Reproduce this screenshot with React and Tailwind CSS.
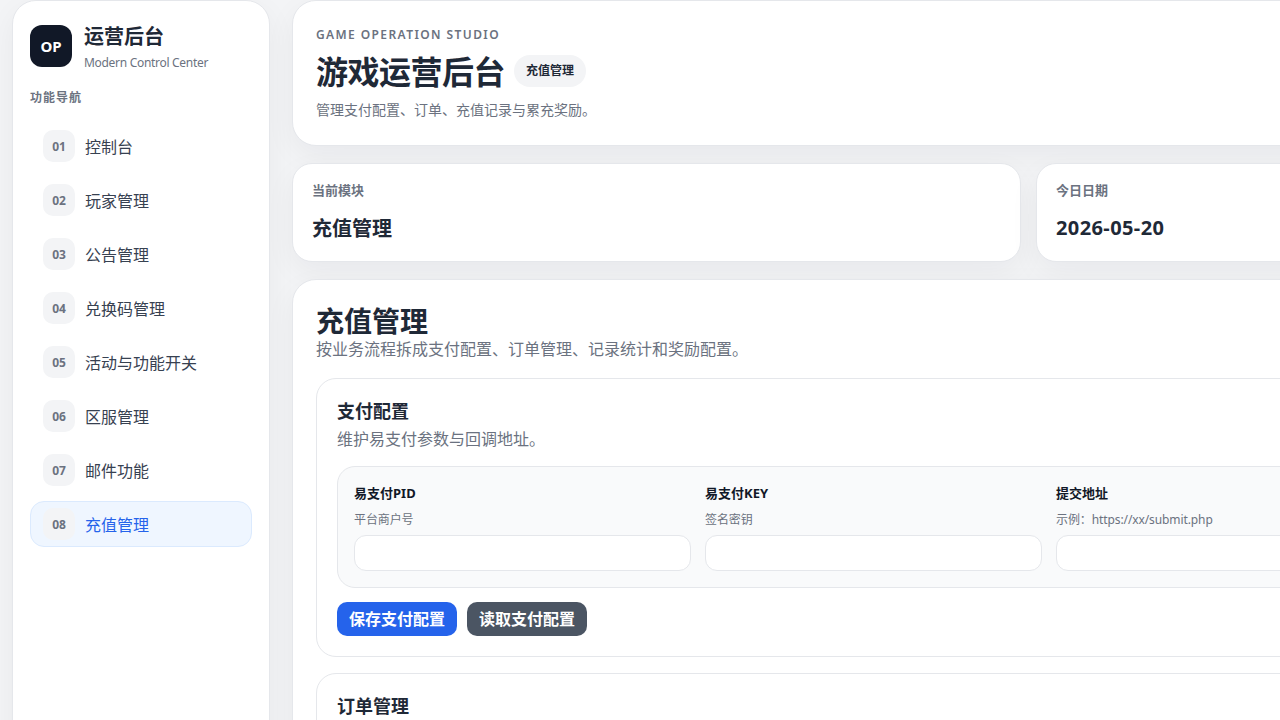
const navItems = ["控制台", "玩家管理", "公告管理", "兑换码管理", "活动与功能开关", "区服管理", "邮件功能", "充值管理"];

const payFields = [
  { label: "易支付PID", hint: "平台商户号" },
  { label: "易支付KEY", hint: "签名密钥" },
  { label: "提交地址", hint: "示例：https://xx/submit.php" },
  { label: "回调地址", hint: "示例：https://xx/notify" },
];

function Sidebar() {
  return (
    <aside className="w-[258px] shrink-0 h-[760px] bg-white border border-[#e5e7eb] rounded-[24px] px-[17px] pt-[24px] shadow-[0_10px_30px_rgba(17,24,39,0.05)]">
      <div className="flex items-start gap-3">
        <div className="w-[42px] h-[42px] rounded-xl bg-[#111827] text-white flex items-center justify-center text-[15px] font-bold">OP</div>
        <div>
          <div className="text-[20px] leading-[24px] font-bold text-[#1f2937]">运营后台</div>
          <div className="text-[12px] leading-[16px] mt-[6px] tracking-[-0.3px] text-[#6b7280]">Modern Control Center</div>
        </div>
      </div>
      <div className="mt-[19px] text-[12px] leading-[16px] font-bold tracking-[0.08em] text-[#6b7280]">功能导航</div>
      <nav className="mt-[17px] flex flex-col gap-2">
        {navItems.map((item, i) => (
          <div
            key={item}
            className={
              i === 7
                ? "h-[46px] flex items-center gap-[10px] pl-3 rounded-[14px] border border-[#dbeafe] bg-[#eff6ff] text-[#2563eb]"
                : "h-[46px] flex items-center gap-[10px] pl-3 rounded-[14px] border border-transparent text-[#374151]"
            }
          >
            <span className="w-[32px] h-[32px] pt-[1px] rounded-[10px] bg-[#f3f4f6] flex items-center justify-center text-[12px] font-bold text-[#6b7280]">
              {"0" + (i + 1)}
            </span>
            <span className="text-[16px] leading-[24px] translate-y-[1px]">{item}</span>
          </div>
        ))}
      </nav>
    </aside>
  );
}

function Field({ label, hint }) {
  return (
    <div>
      <div className="text-[13px] leading-[18px] mt-[1px] font-bold text-[#111827]">{label}</div>
      <div className="text-[12px] leading-[16px] mt-[10px] tracking-[-0.1px] text-[#6b7280]">{hint}</div>
      <input className="mt-[7px] block w-full h-[36px] bg-white border border-[#e5e7eb] rounded-xl" />
    </div>
  );
}

export default function App() {
  return (
    <div
      className="h-screen overflow-hidden bg-[#f3f4f6] flex gap-[22px] pl-3 text-[#1f2937]"
      style={{ fontFamily: '"Noto Sans", "Noto Sans CJK SC", sans-serif' }}
    >
      <Sidebar />
      <main className="w-[1514px] shrink-0 flex flex-col">
        <header className="h-[146px] shrink-0 bg-white border border-[#e5e7eb] rounded-[24px] px-[23px] pt-[26px] shadow-[0_10px_30px_rgba(17,24,39,0.05)]">
          <div className="text-[12px] leading-[16px] font-semibold tracking-[1.4px] text-[#6b7280]">GAME OPERATION STUDIO</div>
          <div className="mt-[7px] flex items-center gap-[9px]">
            <h1 className="text-[32px] leading-[44px] font-bold tracking-[-0.5px] text-[#1f2937]">游戏运营后台</h1>
            <span className="h-[32px] mb-[2px] px-3 rounded-full bg-[#f3f4f6] flex items-center text-[12px] font-bold text-[#1f2937]">充值管理</span>
          </div>
          <p className="mt-[6px] text-[14px] leading-[20px] text-[#6b7280]">管理支付配置、订单、充值记录与累充奖励。</p>
        </header>

        <div className="mt-[17px] shrink-0 grid grid-cols-[729px_1fr] gap-[15px]">
          <div className="h-[99px] bg-white border border-[#e5e7eb] rounded-[20px] px-[19px] pt-[17px] shadow-[0_10px_30px_rgba(17,24,39,0.05)]">
            <div className="text-[13px] leading-[18px] font-bold text-[#6b7280]">当前模块</div>
            <div className="mt-[16px] text-[20px] leading-[28px] font-bold text-[#1f2937]">充值管理</div>
          </div>
          <div className="h-[99px] bg-white border border-[#e5e7eb] rounded-[20px] px-[19px] pt-[17px] shadow-[0_10px_30px_rgba(17,24,39,0.05)]">
            <div className="text-[13px] leading-[18px] font-bold text-[#6b7280]">今日日期</div>
            <div className="mt-[15px] text-[20px] leading-[28px] font-bold tracking-[0.4px] text-[#1f2937]">2026-05-20</div>
          </div>
        </div>

        <section className="mt-[17px] shrink-0 bg-white border border-[#e5e7eb] rounded-[24px] px-[23px] pt-[21px] pb-6 shadow-[0_10px_30px_rgba(17,24,39,0.05)]">
          <h2 className="text-[28px] leading-[40px] font-bold text-[#1f2937]">充值管理</h2>
          <p className="text-[16px] leading-[20px] -mt-[2px] text-[#6b7280]">按业务流程拆成支付配置、订单管理、记录统计和奖励配置。</p>

          <div className="mt-[19px] border border-[#e5e7eb] rounded-[20px] px-5 pt-[20px] pb-5">
            <h3 className="text-[18px] leading-[24px] font-bold text-[#1f2937]">支付配置</h3>
            <p className="mt-[4px] text-[16px] leading-[24px] text-[#6b7280]">维护易支付参数与回调地址。</p>
            <div className="mt-[15px] grid grid-cols-4 gap-[14px] bg-[#f9fafb] border border-[#e5e7eb] rounded-[18px] p-4">
              {payFields.map((f) => (
                <Field key={f.label} label={f.label} hint={f.hint} />
              ))}
            </div>
            <div className="mt-[14px] flex gap-[10px]">
              <button className="w-[120px] h-[34px] rounded-[10px] bg-[#2563eb] text-white text-[16px] font-bold">保存支付配置</button>
              <button className="w-[120px] h-[34px] rounded-[10px] bg-[#4b5563] text-white text-[16px] font-bold">读取支付配置</button>
            </div>
          </div>

          <div className="mt-[16px] border border-[#e5e7eb] rounded-[20px] px-5 pt-[20px] h-[200px]">
            <h3 className="text-[18px] leading-[24px] font-bold text-[#1f2937]">订单管理</h3>
          </div>
        </section>
      </main>
    </div>
  );
}
